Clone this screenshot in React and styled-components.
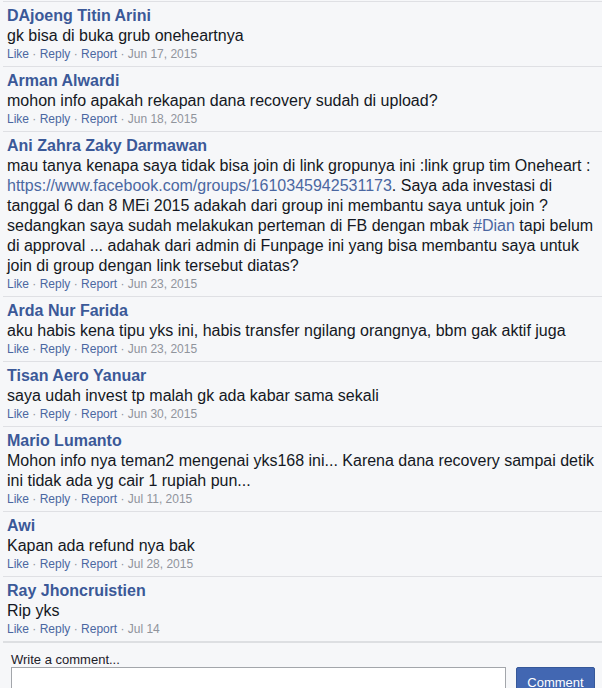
import React from "react";
import styled, { createGlobalStyle } from "styled-components";

const Global = createGlobalStyle`
  html, body { margin: 0; padding: 0; background: #f6f7f9; }
  body { font-family: "Liberation Sans", Arial, sans-serif; overflow: hidden; }
`;

const Page = styled.div`
  width: 602px;
  height: 688px;
  overflow: hidden;
  background: #f6f7f9;
  padding-top: 1px;
  box-sizing: border-box;
`;

const List = styled.div`
  display: flex;
  flex-direction: column;
  padding-left: 3px;
`;

const Comment = styled.div`
  border-top: 1px solid #dfe0e4;
  padding: 4px 4px 4px 4px;
`;

const Name = styled.div`
  font-weight: bold;
  font-size: 16px;
  line-height: 20px;
  color: #3b5998;
`;

const Body = styled.div`
  font-size: 16px;
  line-height: 20px;
  color: #141823;
  width: 590px;
`;

const Link = styled.span`
  color: #4b67a1;
`;

const Actions = styled.div`
  font-size: 12px;
  line-height: 16px;
  color: #90949c;
`;

const Action = styled.span`
  color: #4b67a1;
`;

const Footer = styled.div`
  margin-left: 3px;
  border-top: 2px solid #dddfe2;
  padding: 10px 7px 0 8px;
`;

const Label = styled.div`
  font-size: 13px;
  line-height: 14px;
  color: #1d2129;
`;

const Row = styled.div`
  display: flex;
  gap: 10px;
  align-items: flex-start;
`;

const Input = styled.div`
  width: 495px;
  height: 30px;
  background: #fff;
  border: 1px solid #a3a6ab;
  box-sizing: border-box;
`;

const Button = styled.button`
  width: 79px;
  height: 30px;
  background: #4267b2;
  border: 1px solid #365899;
  border-radius: 2px;
  color: #fff;
  font-family: "Liberation Sans", Arial, sans-serif;
  font-size: 13px;
  line-height: 15px;
  padding: 7px 0 0 0;
  display: flex;
  justify-content: center;
  align-items: flex-start;
  box-sizing: border-box;
`;

const comments = [
  { name: "DAjoeng Titin Arini", body: ["gk bisa di buka grub oneheartnya"], date: "Jun 17, 2015" },
  { name: "Arman Alwardi", body: ["mohon info apakah rekapan dana recovery sudah di upload?"], date: "Jun 18, 2015" },
  {
    name: "Ani Zahra Zaky Darmawan",
    body: [
      "mau tanya kenapa saya tidak bisa join di link gropunya ini :link grup tim Oneheart : ",
      { link: "https://www.facebook.com/groups/1610345942531173" },
      ". Saya ada investasi di tanggal 6 dan 8 MEi 2015 adakah dari group ini membantu saya untuk join ? sedangkan saya sudah melakukan perteman di FB dengan mbak ",
      { link: "#Dian" },
      " tapi belum di approval ... adahak dari admin di Funpage ini yang bisa membantu saya untuk join di group dengan link tersebut diatas?",
    ],
    date: "Jun 23, 2015",
  },
  { name: "Arda Nur Farida", body: ["aku habis kena tipu yks ini, habis transfer ngilang orangnya, bbm gak aktif juga"], date: "Jun 23, 2015" },
  { name: "Tisan Aero Yanuar", body: ["saya udah invest tp malah gk ada kabar sama sekali"], date: "Jun 30, 2015" },
  { name: "Mario Lumanto", body: ["Mohon info nya teman2 mengenai yks168 ini... Karena dana recovery sampai detik ini tidak ada yg cair 1 rupiah pun..."], date: "Jul 11, 2015" },
  { name: "Awi", body: ["Kapan ada refund nya bak"], date: "Jul 28, 2015" },
  { name: "Ray Jhoncruistien", body: ["Rip yks"], date: "Jul 14" },
];

export default function App() {
  return (
    <Page>
      <Global />
      <List>
        {comments.map((c, i) => (
          <Comment key={i}>
            <Name>{c.name}</Name>
            <Body>
              {c.body.map((p, j) =>
                typeof p === "string" ? <React.Fragment key={j}>{p}</React.Fragment> : <Link key={j}>{p.link}</Link>
              )}
            </Body>
            <Actions>
              <Action>Like</Action> · <Action>Reply</Action> · <Action>Report</Action> · {c.date}
            </Actions>
          </Comment>
        ))}
      </List>
      <Footer>
        <Label>Write a comment...</Label>
        <Row>
          <Input />
          <Button>Comment</Button>
        </Row>
      </Footer>
    </Page>
  );
}
